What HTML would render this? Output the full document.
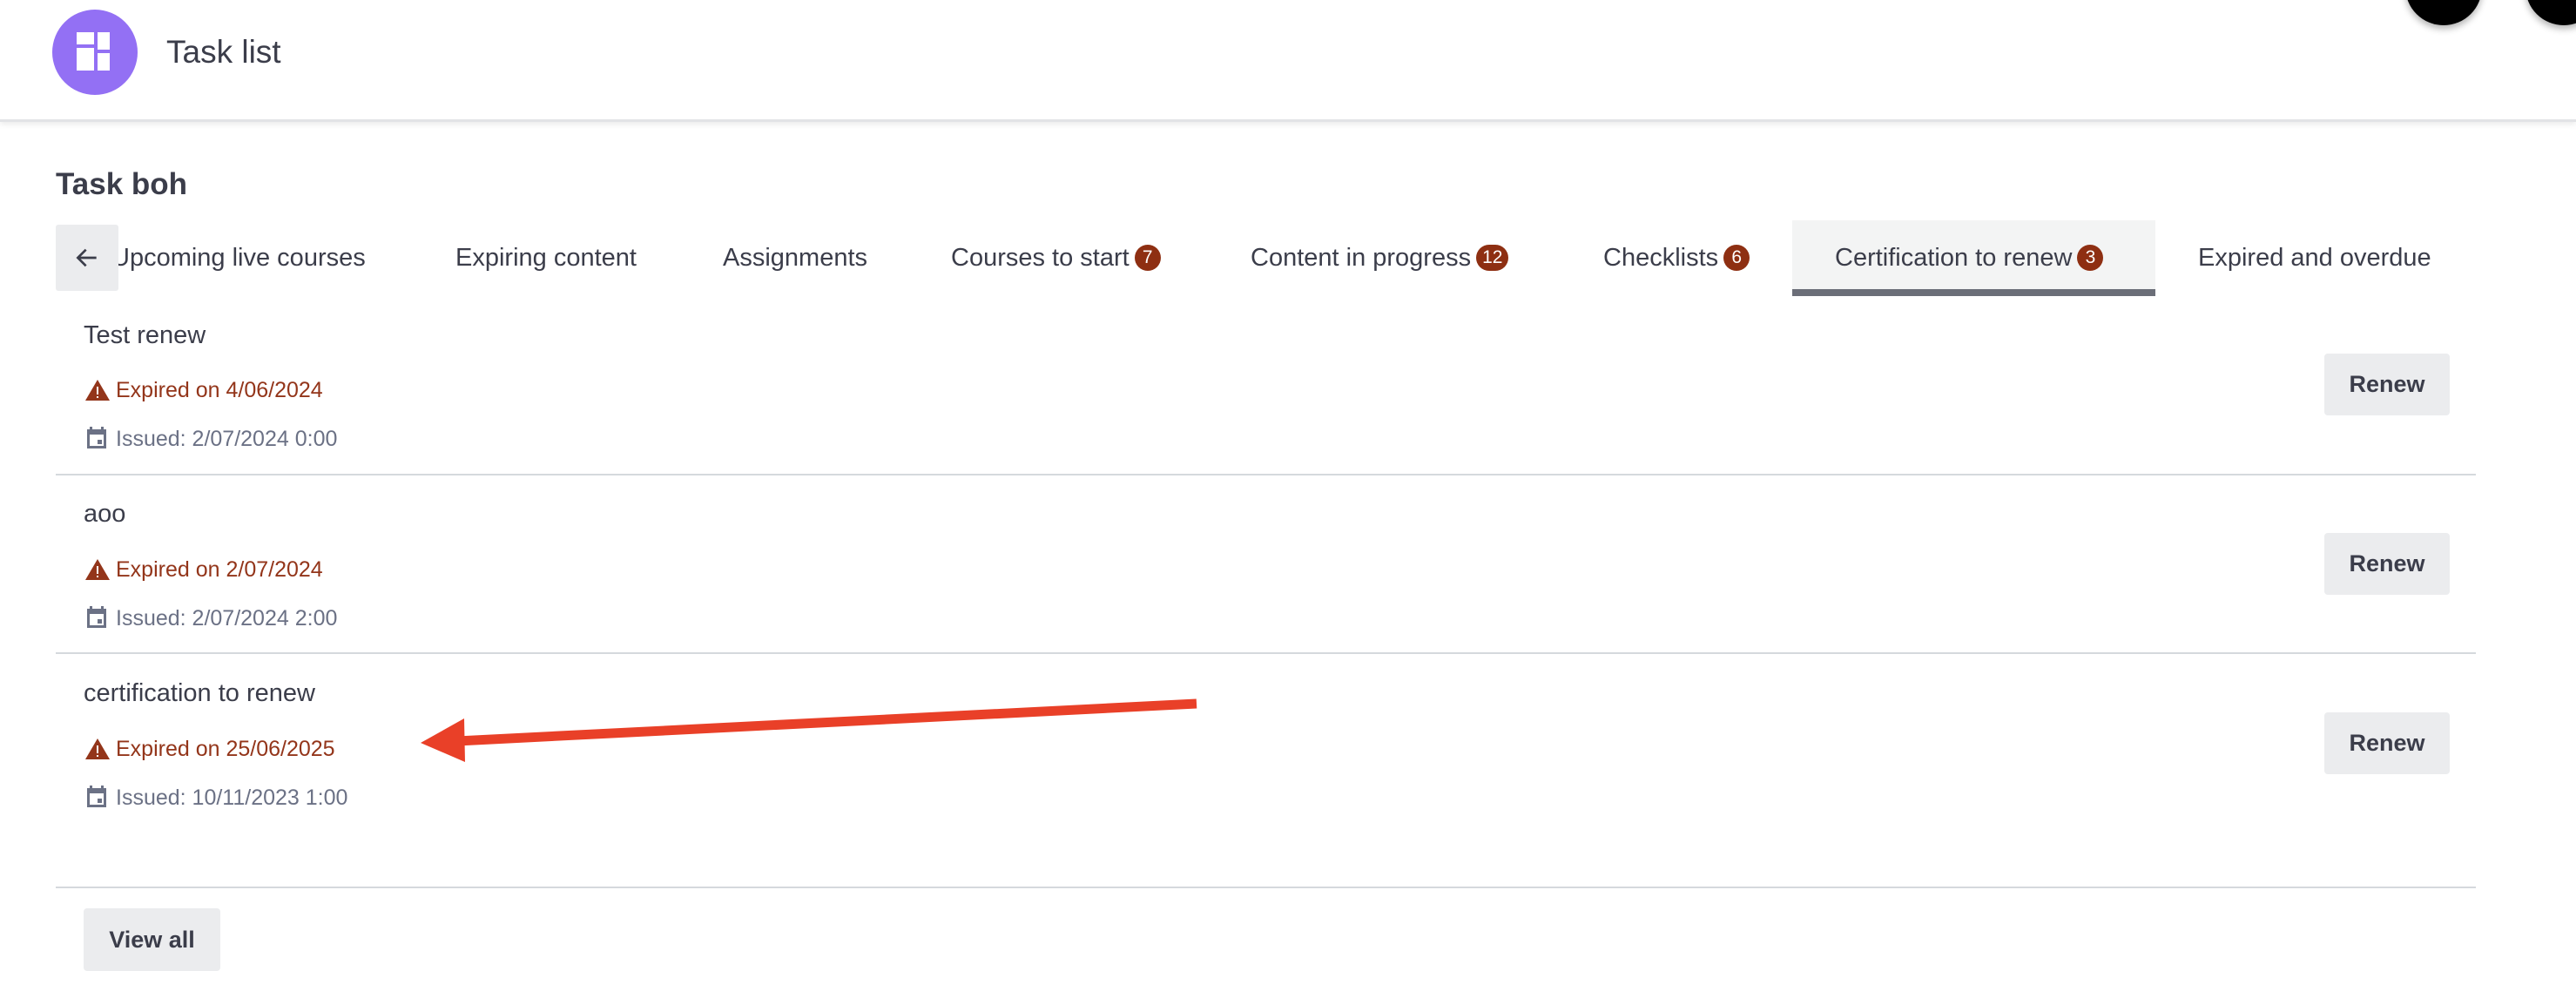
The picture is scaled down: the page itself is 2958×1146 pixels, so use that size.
<!DOCTYPE html>
<html><head><meta charset="utf-8"><style>
*{margin:0;padding:0;box-sizing:border-box}
body{width:2958px;height:1146px;background:#fff;font-family:"Liberation Sans",sans-serif;color:#3b3d4a;position:relative;overflow:hidden}
.a{position:absolute;white-space:nowrap}
.hdr{position:absolute;left:0;top:0;width:2958px;height:140px;border-bottom:3px solid #e2e3e6;box-shadow:0 3px 6px rgba(0,0,0,.08)}
.tab{position:absolute;top:280px;font-size:29px;color:#3b3d4a}
.badge{display:inline-block;background:#8e2f12;color:#fff;font-size:21px;border-radius:15px;height:30px;min-width:30px;padding:0 7px;line-height:30px;text-align:center;vertical-align:3px;margin-left:6px}
.title{font-size:29px;color:#3b3d4a}
.exp{font-size:25px;color:#93351a}
.iss{font-size:25px;color:#6b7185}
.btn{position:absolute;background:#ebecee;border-radius:4px;font-weight:bold;font-size:27px;color:#3b3d4a;text-align:center}
.hr{position:absolute;left:64px;width:2779px;height:2px;background:#d5d9dd}
</style></head><body>
<div class="hdr"></div>
<div class="a" style="left:60px;top:11px;width:98px;height:98px;border-radius:50%;background:#9370f4"></div>
<div class="a" style="left:88px;top:37px;width:20px;height:14px;background:#fff"></div>
<div class="a" style="left:112px;top:37px;width:14px;height:20px;background:#fff"></div>
<div class="a" style="left:88px;top:55px;width:20px;height:26px;background:#fff"></div>
<div class="a" style="left:112px;top:61px;width:14px;height:20px;background:#fff"></div>
<div class="a" style="left:191px;top:39px;font-size:37px">Task list</div>
<div class="a" style="left:2762px;top:-59px;width:88px;height:88px;border-radius:50%;background:#000;box-shadow:0 4px 8px rgba(0,0,0,.3)"></div>
<div class="a" style="left:2900px;top:-59px;width:88px;height:88px;border-radius:50%;background:#000;box-shadow:0 4px 8px rgba(0,0,0,.3)"></div>
<div class="a" style="left:64px;top:192px;font-size:35px;font-weight:bold">Task boh</div>

<div class="a" style="left:2058px;top:253px;width:417px;height:87px;background:#f3f4f4"></div>
<div class="a" style="left:2058px;top:332px;width:417px;height:8px;background:#6b6e78"></div>
<div class="tab" style="left:128px">Upcoming live courses</div>
<div class="tab" style="left:523px">Expiring content</div>
<div class="tab" style="left:830px">Assignments</div>
<div class="tab" style="left:1092px">Courses to start<span class="badge">7</span></div>
<div class="tab" style="left:1436px">Content in progress<span class="badge">12</span></div>
<div class="tab" style="left:1841px">Checklists<span class="badge">6</span></div>
<div class="tab" style="left:2107px">Certification to renew<span class="badge">3</span></div>
<div class="tab" style="left:2524px">Expired and overdue</div>
<div class="a" style="left:64px;top:258px;width:72px;height:76px;background:#ebecee;border-radius:3px"></div>
<svg class="a" style="left:84px;top:280px" width="32" height="32" viewBox="0 0 24 24"><path d="M20 12H5M11 5l-7 7 7 7" stroke="#3b3d4a" stroke-width="2" fill="none"/></svg>

<div class="a title" style="left:96px;top:369px">Test renew</div>
<div class="a exp" style="left:133px;top:434px">Expired on 4/06/2024</div>
<div class="a iss" style="left:133px;top:490px">Issued: 2/07/2024 0:00</div>
<div class="btn" style="left:2669px;top:406px;width:144px;height:71px;line-height:71px">Renew</div>
<div class="hr" style="top:544px"></div>

<div class="a title" style="left:96px;top:574px">aoo</div>
<div class="a exp" style="left:133px;top:640px">Expired on 2/07/2024</div>
<div class="a iss" style="left:133px;top:696px">Issued: 2/07/2024 2:00</div>
<div class="btn" style="left:2669px;top:612px;width:144px;height:71px;line-height:71px">Renew</div>
<div class="hr" style="top:749px"></div>

<div class="a title" style="left:96px;top:780px">certification to renew</div>
<div class="a exp" style="left:133px;top:846px">Expired on 25/06/2025</div>
<div class="a iss" style="left:133px;top:902px">Issued: 10/11/2023 1:00</div>
<div class="btn" style="left:2669px;top:818px;width:144px;height:71px;line-height:71px">Renew</div>
<div class="hr" style="top:1018px"></div>
<div class="btn" style="left:96px;top:1043px;width:157px;height:72px;line-height:72px">View all</div>

<svg class="a" style="left:0;top:0" width="2958" height="1146">
<g fill="#93351a">
<path d="M112 436L126 460H98Z"/><path d="M112 642L126 666H98Z"/><path d="M112 848L126 872H98Z"/>
</g>
<g fill="#fff"><rect x="111" y="444" width="2" height="9"/><rect x="111" y="455" width="2" height="2"/>
<rect x="111" y="650" width="2" height="9"/><rect x="111" y="661" width="2" height="2"/>
<rect x="111" y="856" width="2" height="9"/><rect x="111" y="867" width="2" height="2"/></g>
<g fill="#6b7185">
<path d="M100 493h22v22h-22z M103 490h3v4h-3z M116 490h3v4h-3z"/>
<path d="M100 699h22v22h-22z M103 696h3v4h-3z M116 696h3v4h-3z"/>
<path d="M100 905h22v22h-22z M103 902h3v4h-3z M116 902h3v4h-3z"/>
</g>
<g fill="#fff"><rect x="103" y="499" width="16" height="13"/><rect x="103" y="705" width="16" height="13"/><rect x="103" y="911" width="16" height="13"/></g>
<g fill="#6b7185"><rect x="112" y="505" width="5" height="5"/><rect x="112" y="711" width="5" height="5"/><rect x="112" y="917" width="5" height="5"/></g>
<line x1="1374" y1="808" x2="525" y2="851" stroke="#e94028" stroke-width="11"/>
<path d="M483 853L533 825L534 875Z" fill="#e94028"/>
</svg>
</body></html>
